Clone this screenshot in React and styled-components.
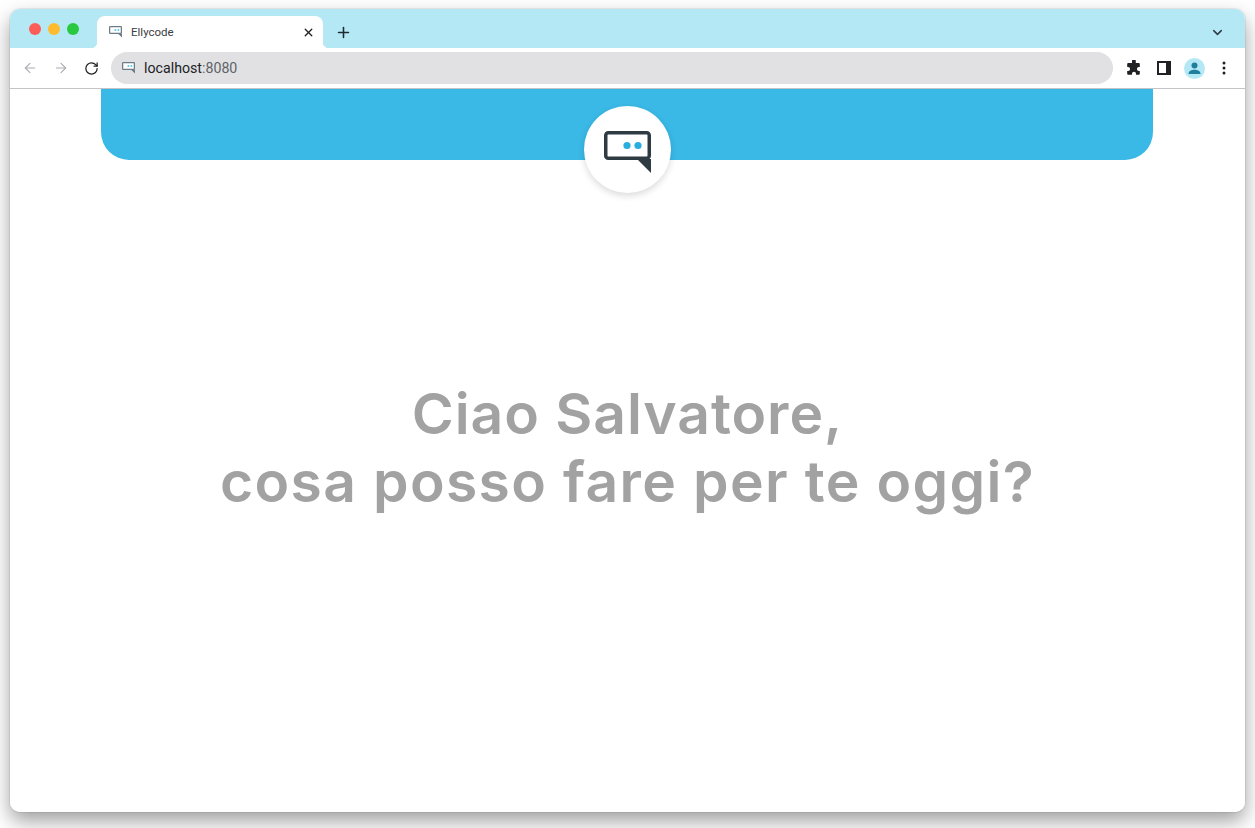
import React from 'react';
import styled, { createGlobalStyle } from 'styled-components';
import { X, Plus, ChevronDown, ArrowLeft, ArrowRight, RotateCw } from 'lucide-react';

const GlobalStyle = createGlobalStyle`
  html, body {
    margin: 0;
    padding: 0;
    background: #fff;
    overflow: hidden;
  }
`;

const Desktop = styled.div`
  width: 1255px;
  height: 828px;
  box-sizing: border-box;
  padding: 9px 10px 16px;
  background: #fff;
  font-family: "Roboto", "Liberation Sans", sans-serif;
`;

const BrowserWindow = styled.div`
  height: 803px;
  display: flex;
  flex-direction: column;
  border-radius: 10px;
  overflow: hidden;
  background: #fff;
  box-shadow: 0 0 0 1px rgba(0, 0, 0, 0.06), 0 9px 20px rgba(0, 0, 0, 0.38);
`;

const TabStrip = styled.div`
  height: 39px;
  flex: none;
  display: flex;
  align-items: flex-end;
  background: #b5e8f5;
  padding-left: 19px;
  padding-right: 20px;
`;

const TrafficLights = styled.div`
  display: flex;
  gap: 7px;
  align-self: flex-start;
  margin-top: 14px;
  margin-right: 18px;
`;

const Light = styled.span`
  width: 12px;
  height: 12px;
  border-radius: 50%;
  background: ${(p) => p.$color};
`;

const Tab = styled.div`
  position: relative;
  width: 226px;
  height: 32px;
  box-sizing: border-box;
  display: flex;
  align-items: center;
  padding: 0 8px 0 12px;
  background: #fff;
  border-radius: 8px 8px 0 0;
  color: #3c4043;
  font-size: 11.5px;

  &::before,
  &::after {
    content: '';
    position: absolute;
    bottom: 0;
    width: 6px;
    height: 6px;
  }

  &::before {
    left: -6px;
    background: radial-gradient(circle at 0 0, transparent 6px, #fff 6.5px);
  }

  &::after {
    right: -6px;
    background: radial-gradient(circle at 100% 0, transparent 6px, #fff 6.5px);
  }
`;

const TabTitle = styled.span`
  flex: 1;
  margin-left: 9px;
`;

const NewTab = styled.div`
  display: flex;
  align-items: center;
  margin: 0 0 7px 12px;
  color: #1d2a30;
`;

const Spacer = styled.div`
  flex: 1;
`;

const TabMenu = styled.div`
  display: flex;
  margin-bottom: 8px;
  color: #2d3b42;
`;

const Toolbar = styled.div`
  height: 41px;
  flex: none;
  box-sizing: border-box;
  display: flex;
  align-items: center;
  padding: 0 6px 0 5px;
  background: #fff;
  border-bottom: 1px solid #c4c4c6;
`;

const NavButtons = styled.div`
  display: flex;
  align-items: center;
  gap: 0.5px;
  margin-right: 5px;
`;

const IconSlot = styled.span`
  width: 30px;
  display: flex;
  justify-content: center;
  align-items: center;
  color: ${(p) => (p.$off ? '#a9acb0' : '#202124')};
`;

const AddressBar = styled.div`
  flex: 1;
  height: 32px;
  display: flex;
  align-items: center;
  padding-left: 11px;
  border-radius: 16px;
  background: #e1e1e4;
  font-size: 14.2px;
  color: #202124;
`;

const AddressText = styled.span`
  margin-left: 9px;
`;

const Port = styled.span`
  color: #5f6368;
`;

const ToolIcons = styled.div`
  display: flex;
  align-items: center;
  margin-left: 6px;
`;

const Avatar = styled.div`
  width: 21px;
  height: 21px;
  display: flex;
  align-items: center;
  justify-content: center;
  border-radius: 50%;
  background: #b5e8f5;
`;

const Page = styled.main`
  flex: 1;
  display: flex;
  flex-direction: column;
  align-items: center;
  background: #fff;
`;

const Banner = styled.div`
  position: relative;
  width: 1052px;
  height: 71px;
  flex: none;
  margin-right: 1px;
  background: #3ab8e6;
  border-radius: 0 0 28px 28px;
`;

const LogoBadge = styled.div`
  position: absolute;
  left: 483px;
  top: 17px;
  width: 87px;
  height: 87px;
  box-sizing: border-box;
  padding-top: 4px;
  display: flex;
  align-items: center;
  justify-content: center;
  border-radius: 50%;
  background: #fff;
  box-shadow: 0 3px 7px rgba(0, 0, 0, 0.14);
`;

const Greeting = styled.h1`
  margin: 220px 0 0;
  font-family: "Inter", "Noto Sans", sans-serif;
  font-size: 57px;
  line-height: 68px;
  font-weight: 600;
  text-align: center;
  color: #a2a2a2;
`;

const GreetingLine = styled.span`
  display: block;
  letter-spacing: ${(p) => p.$spacing};
`;

const ChatIcon = ({ size = 47, frame = '#2f3b42', dots = '#29aee0', weight = 3.5 }) => (
  <svg width={size} height={(size * 42) / 47} viewBox="0 0 47 42" fill="none">
    <rect
      x={weight / 2}
      y={weight / 2}
      width={47 - weight}
      height={29 - weight}
      rx="2.5"
      stroke={frame}
      strokeWidth={weight}
      fill="#fff"
    />
    <path d="M33 28 L47 28 L47 42 Z" fill={frame} />
    <circle cx="23" cy="14.5" r="3.6" fill={dots} />
    <circle cx="34" cy="14.5" r="3.6" fill={dots} />
  </svg>
);

const PuzzleIcon = () => (
  <svg width="16" height="16" viewBox="0 0 16 16">
    <path
      fill="#202124"
      d="M6 1.2a1.9 1.9 0 0 1 3.8 0V3h3a1 1 0 0 1 1 1v3h-.9a2 2 0 0 0 0 4h.9v2.8a1 1 0 0 1-1 1H10v-1a2 2 0 0 0-4 0v1H2.2a1 1 0 0 1-1-1V11h.9a2 2 0 0 0 0-4h-.9V4a1 1 0 0 1 1-1H6z"
    />
  </svg>
);

const SidePanelIcon = () => (
  <svg width="14" height="14" viewBox="0 0 14 14">
    <rect x="1" y="1" width="12" height="12" fill="#fff" stroke="#202124" strokeWidth="2" />
    <rect x="9" y="1" width="4" height="12" fill="#202124" />
  </svg>
);

const PersonIcon = () => (
  <svg width="15" height="15" viewBox="0 0 15 15">
    <circle cx="7.5" cy="4.6" r="3" fill="#1f7f9c" />
    <path d="M1.5 13c0-3 3-4.3 6-4.3s6 1.3 6 4.3z" fill="#1f7f9c" />
  </svg>
);

const KebabIcon = () => (
  <svg width="14" height="16" viewBox="0 0 14 16">
    <circle cx="7" cy="3" r="1.5" fill="#202124" />
    <circle cx="7" cy="8" r="1.5" fill="#202124" />
    <circle cx="7" cy="13" r="1.5" fill="#202124" />
  </svg>
);

const App = () => (
  <Desktop>
    <GlobalStyle />
    <BrowserWindow>
      <TabStrip>
        <TrafficLights>
          <Light $color="#fd5c58" />
          <Light $color="#febb2e" />
          <Light $color="#28c840" />
        </TrafficLights>
        <Tab>
          <ChatIcon size={13} frame="#6b7c85" dots="#5cc4ea" weight={4.5} />
          <TabTitle>Ellycode</TabTitle>
          <X size={13} color="#202124" strokeWidth={2.5} />
        </Tab>
        <NewTab>
          <Plus size={17} strokeWidth={2.2} />
        </NewTab>
        <Spacer />
        <TabMenu>
          <ChevronDown size={15} strokeWidth={2.4} />
        </TabMenu>
      </TabStrip>
      <Toolbar>
        <NavButtons>
          <IconSlot $off><ArrowLeft size={16} strokeWidth={1.6} /></IconSlot>
          <IconSlot $off><ArrowRight size={16} strokeWidth={1.6} /></IconSlot>
          <IconSlot><RotateCw size={15} strokeWidth={2} /></IconSlot>
        </NavButtons>
        <AddressBar>
          <ChatIcon size={13} frame="#6b7c85" dots="#5cc4ea" weight={4.5} />
          <AddressText>localhost<Port>:8080</Port></AddressText>
        </AddressBar>
        <ToolIcons>
          <IconSlot><PuzzleIcon /></IconSlot>
          <IconSlot><SidePanelIcon /></IconSlot>
          <IconSlot><Avatar><PersonIcon /></Avatar></IconSlot>
          <IconSlot><KebabIcon /></IconSlot>
        </ToolIcons>
      </Toolbar>
      <Page>
        <Banner>
          <LogoBadge>
            <ChatIcon />
          </LogoBadge>
        </Banner>
        <Greeting>
          <GreetingLine $spacing="0.95px">Ciao Salvatore,</GreetingLine>
          <GreetingLine $spacing="1.35px">cosa posso fare per te oggi?</GreetingLine>
        </Greeting>
      </Page>
    </BrowserWindow>
  </Desktop>
);

export default App;
